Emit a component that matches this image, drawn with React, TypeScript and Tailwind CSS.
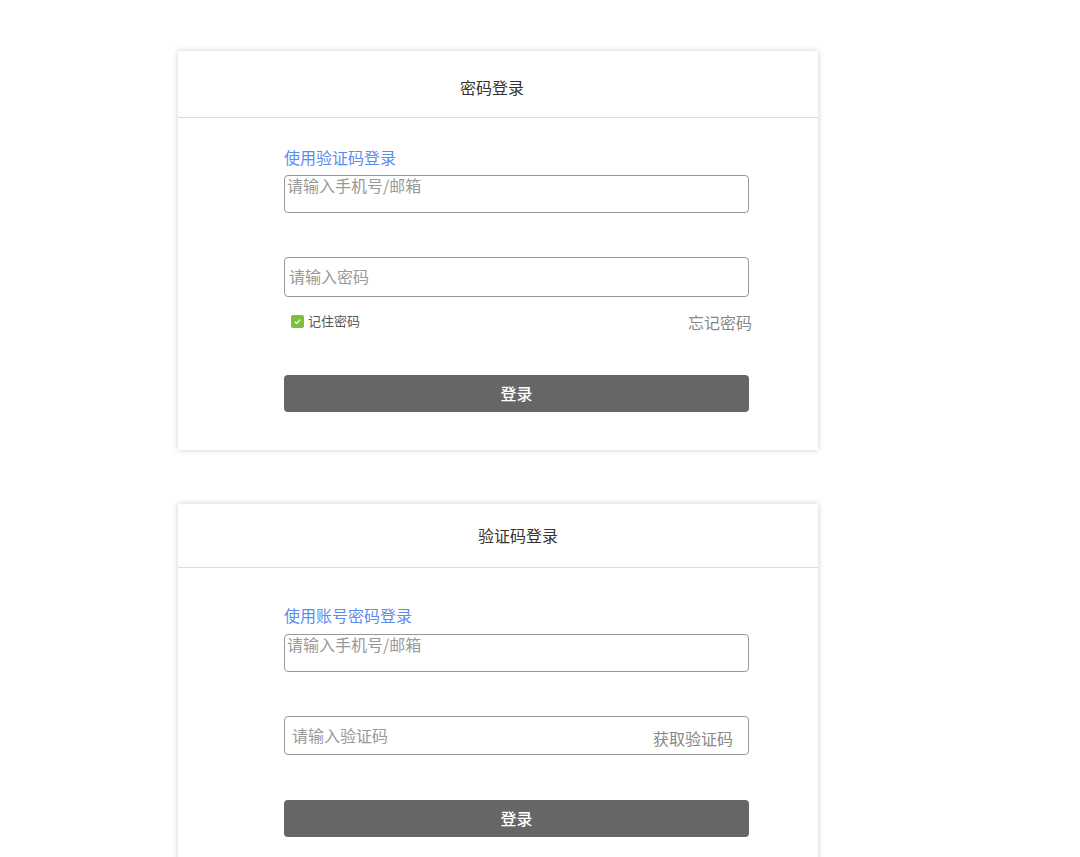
import React from 'react';

const font = { fontFamily: '"Noto Sans CJK SC", "Noto Sans", sans-serif' };

function PasswordCard() {
  return (
    <div className="w-[640px] bg-white shadow-[0_0_6px_rgba(0,0,0,0.2)]">
      <div className="h-[67px] pt-[25px] pr-[12px] text-center text-[16px] leading-[22px] text-[#333] border-b border-[#dcdcdc]">
        密码登录
      </div>
      <div className="pl-[106px] pr-[69px] pt-[28px] pb-[38px]">
        <div className="text-[16px] leading-[22px] text-[#5b8def]">使用验证码登录</div>
        <input
          className="mt-[7px] block w-[465px] h-[38px] border border-[#999] rounded-[4px] pl-[2px] pb-[18px] text-[16px] placeholder:text-[#999] outline-none"
          placeholder="请输入手机号/邮箱"
        />
        <input
          className="mt-[44px] block w-[465px] h-[40px] border border-[#999] rounded-[4px] pl-[4px] pb-[2px] text-[16px] placeholder:text-[#999] outline-none"
          placeholder="请输入密码"
        />
        <div className="mt-[10px] h-[30px] w-[468px] flex items-center justify-between">
          <label className="flex items-center gap-[4px] pl-[7px] pb-[2px] text-[13px] text-[#555]">
            <span className="w-[13px] h-[13px] rounded-[2px] bg-[#7cbf3a] flex items-center justify-center">
              <svg width="9" height="9" viewBox="0 0 10 10">
                <path d="M2 5.2 L4.2 7.2 L8 3" stroke="#fff" strokeWidth="1.4" fill="none" />
              </svg>
            </span>
            记住密码
          </label>
          <span className="text-[16px] text-[#888] pb-[1px]">忘记密码</span>
        </div>
        <button className="mt-[38px] block w-[465px] h-[37px] rounded-[4px] bg-[#666] text-white text-[16px] font-medium pb-[2px]">
          登录
        </button>
      </div>
    </div>
  );
}

function CodeCard() {
  return (
    <div className="w-[640px] bg-white shadow-[0_0_6px_rgba(0,0,0,0.2)]">
      <div className="h-[64px] pt-[20px] pl-[40px] text-center text-[16px] leading-[22px] text-[#333] border-b border-[#dcdcdc]">
        验证码登录
      </div>
      <div className="pl-[106px] pr-[69px] pt-[36px] pb-[38px]">
        <div className="text-[16px] leading-[22px] text-[#5b8def]">使用账号密码登录</div>
        <input
          className="mt-[8px] block w-[465px] h-[38px] border border-[#999] rounded-[4px] pl-[2px] pb-[18px] text-[16px] placeholder:text-[#999] outline-none"
          placeholder="请输入手机号/邮箱"
        />
        <div className="mt-[44px] w-[465px] h-[39px] border border-[#999] rounded-[4px] flex items-center">
          <input
            className="flex-1 h-full pl-[7px] pb-[2px] text-[16px] placeholder:text-[#999] outline-none bg-transparent"
            placeholder="请输入验证码"
          />
          <span className="pr-[15px] pt-[4px] text-[16px] text-[#888]">获取验证码</span>
        </div>
        <button className="mt-[45px] block w-[465px] h-[37px] rounded-[4px] bg-[#666] text-white text-[16px] font-medium pb-[2px]">
          登录
        </button>
      </div>
    </div>
  );
}

export default function App() {
  return (
    <div className="min-h-screen bg-white pt-[51px] pl-[178px] pb-[40px]" style={font}>
      <div className="flex flex-col gap-[54px]">
        <PasswordCard />
        <CodeCard />
      </div>
    </div>
  );
}
